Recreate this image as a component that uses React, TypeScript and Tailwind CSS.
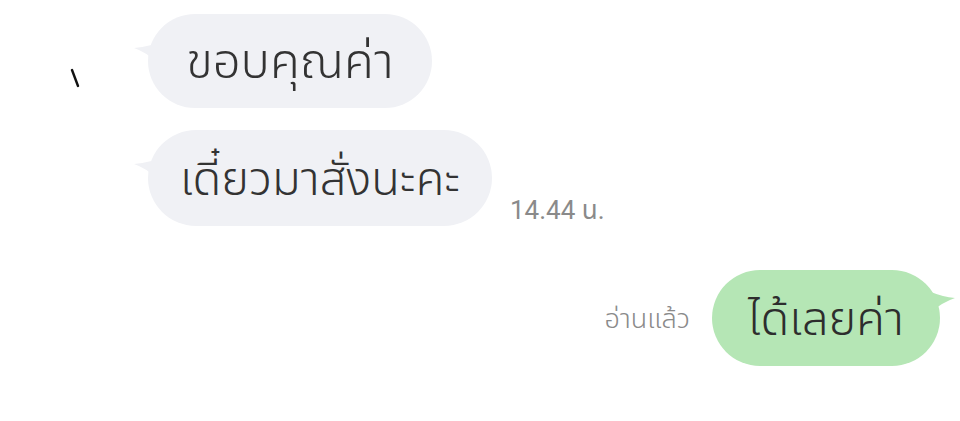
import React from "react";

const thai = { fontFamily: '"Noto Sans Thai", "Noto Sans", "Noto Sans CJK SC", sans-serif' };

function LeftTail({ color }: { color: string }) {
  return (
    <svg className="absolute left-[-14px] top-[30px]" width="22" height="20" viewBox="0 0 22 20">
      <path d="M0 4 Q10 3 22 0 L22 18 Q12 8 0 4 Z" fill={color} />
    </svg>
  );
}

function RightTail({ color }: { color: string }) {
  return (
    <svg className="absolute right-[-15px] top-[22px]" width="24" height="22" viewBox="0 0 24 22">
      <path d="M24 6 Q12 5 0 0 L0 20 Q12 10 24 6 Z" fill={color} />
    </svg>
  );
}

export default function App() {
  return (
    <div className="relative w-[960px] h-[421px] bg-white overflow-hidden" style={thai}>
      <svg className="absolute left-[68px] top-[68px]" width="14" height="22" viewBox="0 0 14 22">
        <path d="M4 2 L10 18" stroke="#111" strokeWidth="2.4" strokeLinecap="round" />
      </svg>
      <div className="flex flex-col pt-[14px]">
        <div className="flex pl-[148px]">
          <div className="relative h-[94px] w-[284px] rounded-[47px] bg-[#f0f1f5] flex items-center justify-center">
            <LeftTail color="#f0f1f5" />
            <span className="mt-[4px] text-[49px] leading-none font-[350] text-[#333]">ขอบคุณค่า</span>
          </div>
        </div>
        <div className="flex items-end pl-[148px] mt-[22px]">
          <div className="relative h-[96px] w-[344px] rounded-[48px] bg-[#f0f1f5] flex items-center justify-center">
            <LeftTail color="#f0f1f5" />
            <span className="mt-[4px] text-[47px] leading-none font-[350] text-[#333]">เดี๋ยวมาสั่งนะคะ</span>
          </div>
          <span className="ml-[18px] mb-[-4px] text-[26px] text-[#8a8a8a]" style={{ fontFamily: 'Roboto, "Noto Sans Thai", sans-serif' }}>14.44 น.</span>
        </div>
        <div className="flex items-center justify-end pr-[20px] mt-[44px]">
          <span className="mr-[22px] mt-[4px] text-[27px] font-[350] text-[#8a8a8a]">อ่านแล้ว</span>
          <div className="relative h-[96px] w-[228px] rounded-[48px] bg-[#b5e6b5] flex items-center justify-center">
            <RightTail color="#b5e6b5" />
            <span className="mt-[4px] text-[47px] leading-none font-[350] text-[#2d2d2d]">ได้เลยค่า</span>
          </div>
        </div>
      </div>
    </div>
  );
}
